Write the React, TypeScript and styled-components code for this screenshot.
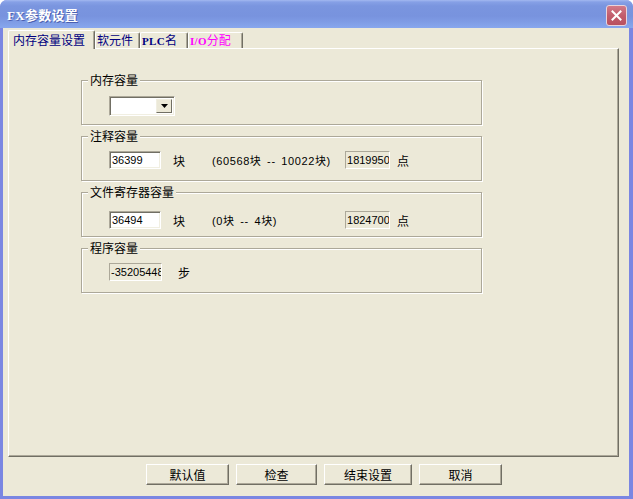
import React from "react";
import styled, { createGlobalStyle } from "styled-components";

const Global = createGlobalStyle`
  html, body { margin: 0; padding: 0; background: #ffffff; }
  body { font-family: "Noto Sans CJK SC", "Liberation Sans", sans-serif; }
  * { box-sizing: border-box; }
`;

const Window = styled.div`
  width: 633px;
  height: 499px;
  display: flex;
  flex-direction: column;
  overflow: hidden;
  border-radius: 7px 7px 0 0;
  background: #7a86e2;
`;

const TitleBar = styled.div`
  height: 28px;
  flex: none;
  display: flex;
  align-items: center;
  padding: 0 6px 0 7px;
  background: linear-gradient(
    180deg,
    #a3b8f0 0px,
    #86a0e6 2px,
    #7a95df 6px,
    #7893de 16px,
    #7f9ce5 22px,
    #88a7ee 28px
  );
`;

const Title = styled.div`
  flex: 1;
  color: #ffffff;
  font-family: "Liberation Serif", "Noto Sans CJK SC", serif;
  font-weight: bold;
  font-size: 13px;
  letter-spacing: 0.3px;
  text-shadow: 1px 1px 0 #4a5fb0;
  padding-top: 1px;
`;

const CloseButton = styled.div`
  width: 21px;
  height: 21px;
  margin-top: 2px;
  border-radius: 3px;
  border: 1px solid #e8d4dc;
  background: linear-gradient(180deg, #d27a88 0%, #c25d6d 50%, #b9505f 100%);
  display: flex;
  align-items: center;
  justify-content: center;
`;

const Body = styled.div`
  flex: 1;
  display: flex;
  flex-direction: column;
  background: #ece9d8;
  margin: 0 4px 3px 3px;
  padding: 2px 0 0 5px;
`;

const TabStrip = styled.div`
  display: flex;
  align-items: flex-end;
  height: 18px;
  position: relative;
  z-index: 1;
`;

const Tab = styled.div<{ $active?: boolean; $width: number; $color?: string }>`
  width: ${(p) => p.$width}px;
  height: ${(p) => (p.$active ? 19 : 16)}px;
  margin-bottom: ${(p) => (p.$active ? -1 : 0)}px;
  background: #ece9d8;
  border-top: 1px solid #ffffff;
  border-left: 1px solid #ffffff;
  border-right: 1px solid #716f64;
  box-shadow: inset -1px 0 0 #aca899;
  border-radius: 2px 2px 0 0;
  color: ${(p) => p.$color ?? "#000080"};
  font-size: 12px;
  line-height: ${(p) => (p.$active ? 17 : 14)}px;
  padding-left: ${(p) => (p.$active ? 4 : 1)}px;
  white-space: nowrap;
  font-family: "Noto Sans CJK SC", "Liberation Sans", sans-serif;
`;

const LatinTab = styled.span`
  font-family: "Liberation Serif", "Noto Sans CJK SC", serif;
  font-weight: bold;
  font-size: 11px;
  letter-spacing: 0.3px;
`;

const Panel = styled.div`
  width: 611px;
  height: 409px;
  flex: none;
  border-top: 1px solid #ffffff;
  border-left: 1px solid #ffffff;
  border-right: 1px solid #716f64;
  border-bottom: 1px solid #716f64;
  box-shadow: inset -1px -1px 0 #aca899;
  padding: 31px 0 0 72px;
  display: flex;
  flex-direction: column;
  gap: 11px;
`;

const GroupBox = styled.div<{ $pad: number }>`
  position: relative;
  width: 401px;
  height: 45px;
  border: 1px solid #aca899;
  box-shadow: inset 1px 1px 0 #ffffff, 1px 1px 0 #ffffff;
  padding: ${(p) => p.$pad}px 0 0 27px;
`;

const Legend = styled.div`
  position: absolute;
  top: -9px;
  left: 6px;
  padding: 0 2px;
  background: #ece9d8;
  font-size: 12px;
  line-height: 16px;
  color: #000000;
`;

const Row = styled.div`
  display: flex;
  align-items: center;
  height: 20px;
`;

const Combo = styled.div`
  width: 66px;
  height: 20px;
  background: #ffffff;
  border-top: 1px solid #aca899;
  border-left: 1px solid #aca899;
  border-right: 1px solid #ffffff;
  border-bottom: 1px solid #ffffff;
  box-shadow: inset 1px 1px 0 #716f64, inset -1px -1px 0 #f1efe2;
  display: flex;
  justify-content: flex-end;
  padding: 2px;
`;

const ComboArrow = styled.div`
  width: 16px;
  height: 14px;
  background: #ece9d8;
  border-top: 1px solid #f1efe2;
  border-left: 1px solid #f1efe2;
  border-right: 1px solid #716f64;
  border-bottom: 1px solid #716f64;
  display: flex;
  align-items: center;
  justify-content: center;
`;

const Field = styled.div<{ $width: number; $readOnly?: boolean }>`
  width: ${(p) => p.$width}px;
  height: 18px;
  flex: none;
  overflow: hidden;
  white-space: nowrap;
  background: ${(p) => (p.$readOnly ? "#ece9d8" : "#ffffff")};
  border-top: 1px solid #aca899;
  border-left: 1px solid #aca899;
  border-right: 1px solid #ffffff;
  border-bottom: 1px solid #ffffff;
  box-shadow: ${(p) =>
    p.$readOnly ? "none" : "inset 1px 1px 0 #716f64, inset -1px -1px 0 #f1efe2"};
  font-family: "Liberation Sans", sans-serif;
  font-size: 11px;
  line-height: 16px;
  padding-left: ${(p) => (p.$readOnly ? 1 : 2)}px;
  color: #000000;
`;

const Label = styled.span<{ $ml: number }>`
  margin-left: ${(p) => p.$ml}px;
  flex: none;
  font-size: 12px;
  color: #000000;
  white-space: nowrap;
`;

const Range = styled.span<{ $ml: number; $width: number }>`
  margin-left: ${(p) => p.$ml}px;
  width: ${(p) => p.$width}px;
  flex: none;
  font-family: "Liberation Sans", "Noto Sans CJK SC", sans-serif;
  font-size: 11px;
  color: #000000;
  white-space: nowrap;
  letter-spacing: 0.6px;
  word-spacing: 2px;
`;

const ButtonRow = styled.div`
  display: flex;
  gap: 7px;
  margin-top: 7px;
  padding-left: 138px;
`;

const Button = styled.div<{ $width: number }>`
  width: ${(p) => p.$width}px;
  height: 21px;
  background: #ece9d8;
  border-top: 1px solid #ffffff;
  border-left: 1px solid #ffffff;
  border-right: 1px solid #716f64;
  border-bottom: 1px solid #716f64;
  box-shadow: inset -1px -1px 0 #aca899;
  display: flex;
  align-items: center;
  justify-content: center;
  font-size: 12px;
  color: #000000;
`;

const CloseIcon = () => (
  <svg width="11" height="11" viewBox="0 0 11 11">
    <path d="M1.5 1.5 L9.5 9.5 M9.5 1.5 L1.5 9.5" stroke="#ffffff" strokeWidth="2" strokeLinecap="square" />
  </svg>
);

const ArrowIcon = () => (
  <svg width="7" height="4" viewBox="0 0 7 4">
    <path d="M0 0 H7 L3.5 4 Z" fill="#000000" />
  </svg>
);

export default function App() {
  return (
    <>
      <Global />
      <Window>
        <TitleBar>
          <Title>FX参数设置</Title>
          <CloseButton>
            <CloseIcon />
          </CloseButton>
        </TitleBar>
        <Body>
          <TabStrip>
            <Tab $active $width={87}>内存容量设置</Tab>
            <Tab $width={45}>软元件</Tab>
            <Tab $width={48}>
              <LatinTab>PLC</LatinTab>名
            </Tab>
            <Tab $width={55} $color="#ff00ff">
              <LatinTab>I/O</LatinTab>分配
            </Tab>
          </TabStrip>
          <Panel>
            <GroupBox $pad={15}>
              <Legend>内存容量</Legend>
              <Row>
                <Combo>
                  <ComboArrow>
                    <ArrowIcon />
                  </ComboArrow>
                </Combo>
              </Row>
            </GroupBox>
            <GroupBox $pad={13}>
              <Legend>注释容量</Legend>
              <Row>
                <Field $width={52}>36399</Field>
                <Label $ml={12}>块</Label>
                <Range $ml={27} $width={133}>(60568块 -- 10022块)</Range>
                <Field $width={45} $readOnly>1819950</Field>
                <Label $ml={7}>点</Label>
              </Row>
            </GroupBox>
            <GroupBox $pad={17}>
              <Legend>文件寄存器容量</Legend>
              <Row>
                <Field $width={52}>36494</Field>
                <Label $ml={12}>块</Label>
                <Range $ml={27} $width={133}>(0块 -- 4块)</Range>
                <Field $width={45} $readOnly>18247000</Field>
                <Label $ml={7}>点</Label>
              </Row>
            </GroupBox>
            <GroupBox $pad={13}>
              <Legend>程序容量</Legend>
              <Row>
                <Field $width={53} $readOnly>-35205448</Field>
                <Label $ml={16}>步</Label>
              </Row>
            </GroupBox>
          </Panel>
          <ButtonRow>
            <Button $width={83}>默认值</Button>
            <Button $width={81}>检查</Button>
            <Button $width={88}>结束设置</Button>
            <Button $width={83}>取消</Button>
          </ButtonRow>
        </Body>
      </Window>
    </>
  );
}
